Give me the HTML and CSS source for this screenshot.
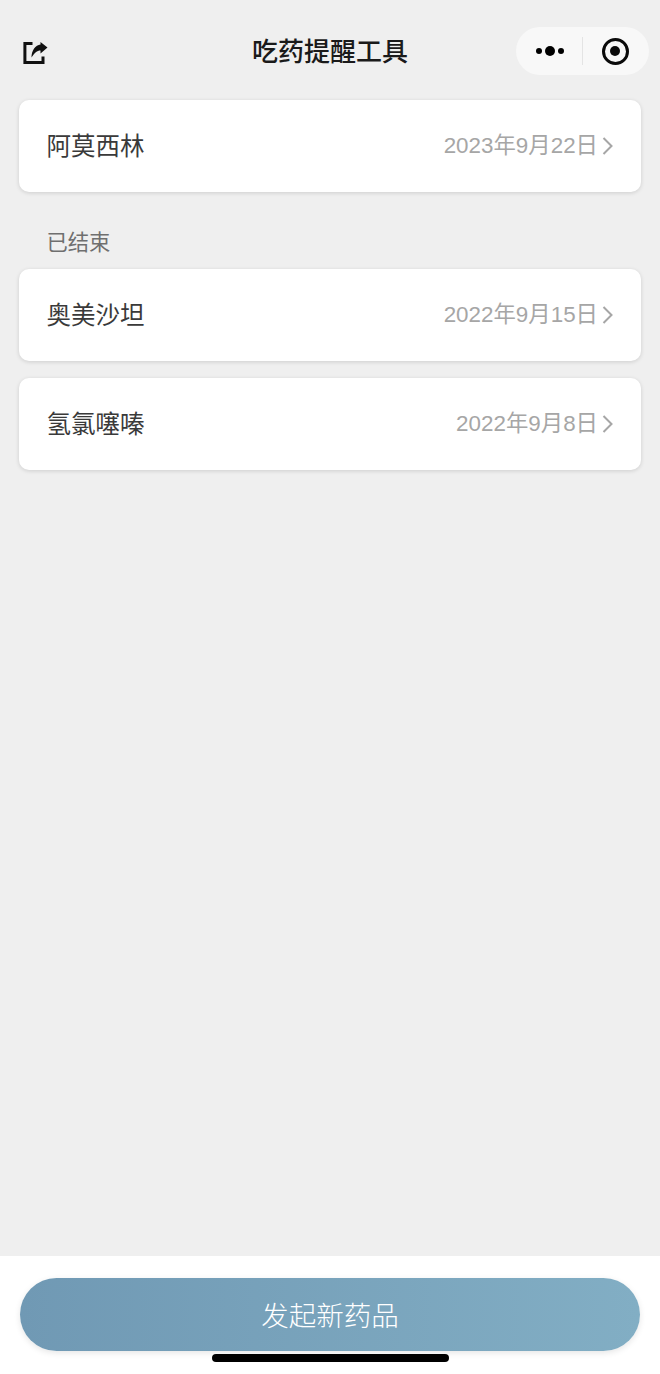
FILE: index.html
```html
<!DOCTYPE html>
<html lang="zh-CN">
<head>
<meta charset="utf-8">
<title>吃药提醒工具</title>
<link rel="stylesheet" href="styles.css">
</head>
<body>
<div class="page">
  <header class="navbar">
    <svg class="share-icon" width="26" height="26" viewBox="0 0 26 26" aria-hidden="true">
      <path class="share-frame" d="M10.500 3.400H2.900V22.500H21V16.500"/>
      <path class="share-arrow" d="M18.500 2L25.500 7.500L18.500 13.500V10.500C15 10.500 12.500 13 9.500 17.500C9.500 10.500 13.500 5 18.500 4.500Z"/>
    </svg>
    <h1 class="navbar-title">吃药提醒工具</h1>
    <div class="capsule">
      <div class="capsule-more"><i class="dot"></i><i class="dot dot-big"></i><i class="dot"></i></div>
      <div class="capsule-line"></div>
      <div class="capsule-target"><i class="target-core"></i></div>
    </div>
  </header>

  <main class="content">
    <a class="card">
      <span class="drug">阿莫西林</span>
      <span class="date">2023年9月22日</span>
      <svg class="chevron" width="11" height="18" viewBox="0 0 11 18" aria-hidden="true"><path d="M1.500 1L9.500 9L1.500 17"/></svg>
    </a>

    <h2 class="section-label">已结束</h2>

    <div class="ended-list">
      <a class="card">
        <span class="drug">奥美沙坦</span>
        <span class="date">2022年9月15日</span>
        <svg class="chevron" width="11" height="18" viewBox="0 0 11 18" aria-hidden="true"><path d="M1.500 1L9.500 9L1.500 17"/></svg>
      </a>
      <a class="card">
        <span class="drug">氢氯噻嗪</span>
        <span class="date">2022年9月8日</span>
        <svg class="chevron" width="11" height="18" viewBox="0 0 11 18" aria-hidden="true"><path d="M1.500 1L9.500 9L1.500 17"/></svg>
      </a>
    </div>
  </main>

  <footer class="footer">
    <button class="new-drug" type="button">发起新药品</button>
    <div class="home-bar"></div>
  </footer>
</div>
</body>
</html>
```
FILE: styles.css
```css
*, *::before { box-sizing: border-box; }

html, body {
  margin: 0;
  padding: 0;
}

body {
  font-family: "Noto Sans CJK SC", "Liberation Sans", sans-serif;
  background: #efefef;
}

.page {
  width: 660px;
  height: 1374px;
  display: flex;
  flex-direction: column;
  overflow: hidden;
}

/* Navigation bar */
.navbar {
  position: relative;
  height: 100px;
  flex: none;
}

.share-icon {
  position: absolute;
  left: 22px;
  top: 40px;
}

.share-frame {
  fill: none;
  stroke: #111;
  stroke-width: 3;
}

.share-arrow {
  fill: #111;
}

.navbar-title {
  margin: 0;
  padding-top: 32px;
  text-align: center;
  font-size: 26px;
  line-height: 36px;
  font-weight: 500;
  color: #1a1a1a;
}

.capsule {
  position: absolute;
  left: 516px;
  top: 27px;
  width: 133px;
  height: 48px;
  border-radius: 24px;
  background: #f8f8f8;
  display: flex;
  align-items: center;
}

.capsule-more {
  width: 66px;
  padding-left: 2px;
  display: flex;
  align-items: center;
  justify-content: center;
  gap: 3px;
}

.dot {
  width: 6px;
  height: 6px;
  border-radius: 50%;
  background: #000;
}

.dot-big {
  width: 10px;
  height: 10px;
}

.capsule-line {
  width: 1px;
  height: 28px;
  background: #e4e4e4;
}

.capsule-target {
  position: relative;
  flex: 1;
  display: flex;
  align-items: center;
  justify-content: center;
  padding-right: 2px;
}

.capsule-target::before {
  content: "";
  width: 27px;
  height: 27px;
  border: 3px solid #0a0a0a;
  border-radius: 50%;
}

.target-core {
  position: absolute;
  left: 50%;
  top: 50%;
  width: 10px;
  height: 10px;
  margin: -5px 0 0 -6px;
  border-radius: 50%;
  background: #0a0a0a;
}

/* List */
.content {
  flex: 1;
  padding: 0 19px;
}

.card {
  display: flex;
  align-items: center;
  height: 92px;
  padding: 0 28px 0 27.500px;
  background: #fff;
  border-radius: 10px;
  box-shadow: 0 1px 4px rgba(0, 0, 0, 0.14);
}

.drug {
  flex: 1;
  font-size: 24.500px;
  line-height: 32px;
  padding-bottom: 3px;
  color: #3a3a3a;
}

.date {
  font-size: 22.400px;
  line-height: 30px;
  color: #a6a6a6;
  font-family: "Liberation Sans", "Noto Sans CJK SC", sans-serif;
}

.chevron {
  margin-left: 4px;
  flex: none;
}

.chevron path {
  fill: none;
  stroke: #a6a6a6;
  stroke-width: 2;
}

.section-label {
  margin: 0;
  padding: 34px 27.500px 13px;
  font-size: 21.300px;
  line-height: 30px;
  font-weight: 400;
  color: #6f6f6f;
}

.ended-list {
  display: flex;
  flex-direction: column;
  gap: 17px;
}

/* Footer action */
.footer {
  flex: none;
  height: 118px;
  background: #fff;
  padding: 22px 20px 0;
  position: relative;
}

.new-drug {
  display: block;
  width: 620px;
  height: 73px;
  padding: 0 0 2px;
  border: 0;
  border-radius: 37px;
  background: linear-gradient(90deg, #7099b4, #82aec4);
  box-shadow: 0 2px 6px rgba(0, 0, 0, 0.1);
  color: #fff;
  font-family: inherit;
  font-size: 27.500px;
  font-weight: 300;
}

.home-bar {
  position: absolute;
  left: 212px;
  top: 98px;
  width: 237px;
  height: 8px;
  border-radius: 4px;
  background: #000;
}
```
